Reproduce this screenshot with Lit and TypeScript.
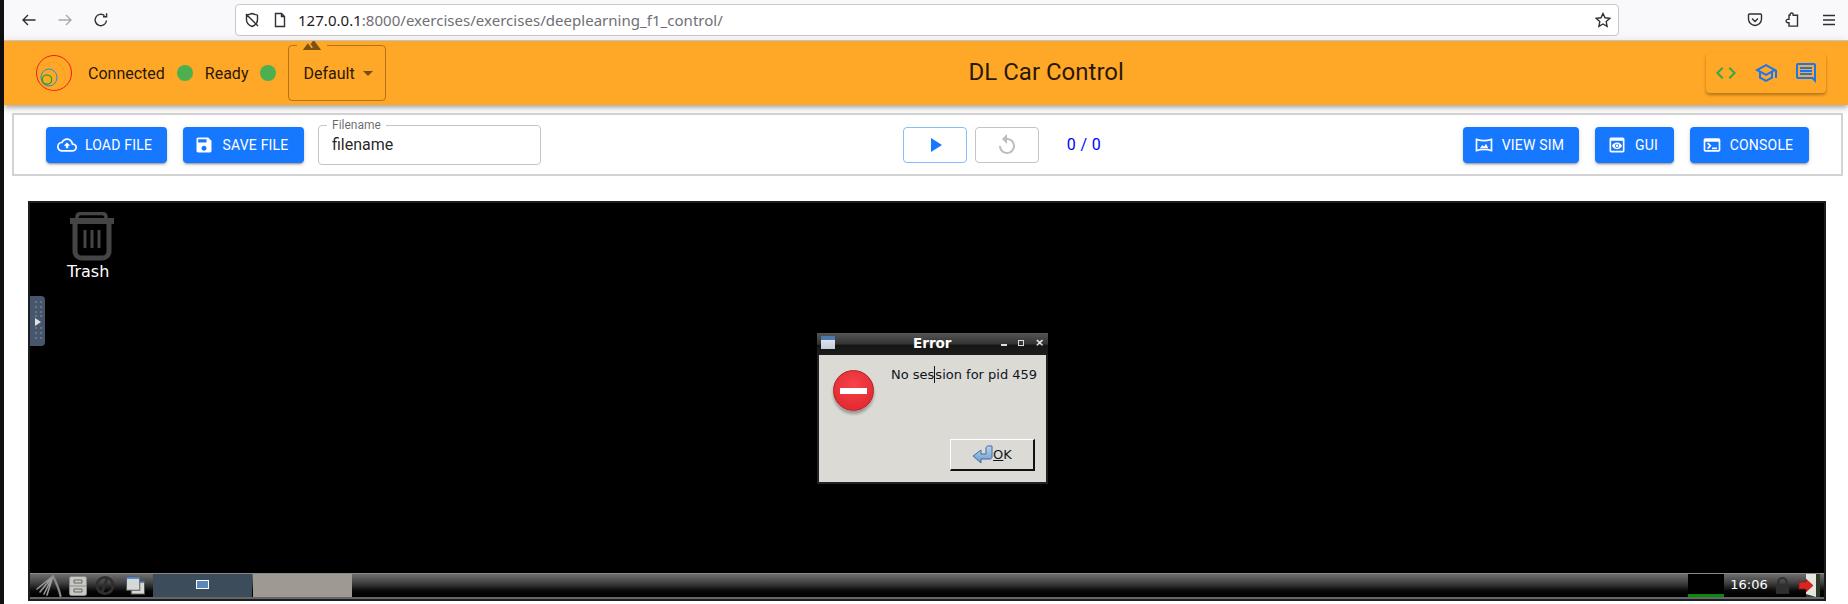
import {LitElement, css, html, svg} from 'lit';
import {customElement} from 'lit/decorators.js';

const icon = (d: string, cls = '') =>
  html`<svg class="mi ${cls}" viewBox="0 0 24 24"><path d="${d}"></path></svg>`;

const ICONS = {
  upload: 'M19.35 10.04C18.67 6.59 15.64 4 12 4 9.11 4 6.6 5.64 5.35 8.04 2.34 8.36 0 10.91 0 14c0 3.31 2.69 6 6 6h13c2.76 0 5-2.24 5-5 0-2.64-2.05-4.78-4.65-4.96zM19 18H6c-2.21 0-4-1.79-4-4 0-2.05 1.53-3.76 3.56-3.97l1.07-.11.5-.95C8.08 7.14 9.94 6 12 6c2.62 0 4.88 1.86 5.39 4.43l.3 1.5 1.53.11c1.56.1 2.78 1.41 2.78 2.96 0 1.65-1.35 3-3 3zM8 13h2.55v3h2.9v-3H16l-4-4z',
  save: 'M17 3H5c-1.11 0-2 .9-2 2v14c0 1.1.89 2 2 2h14c1.1 0 2-.9 2-2V7l-4-4zm-5 16c-1.66 0-3-1.34-3-3s1.34-3 3-3 3 1.34 3 3-1.34 3-3 3zm3-10H5V5h10v4z',
  play: 'M8 5v14l11-7z',
  replay: 'M12 5V1L7 6l5 5V7c3.31 0 6 2.69 6 6s-2.69 6-6 6-6-2.69-6-6H4c0 4.42 3.58 8 8 8s8-3.58 8-8-3.58-8-8-8z',
  pano: 'M20 6.54v10.91c-2.6-.77-5.28-1.16-8-1.16-2.72 0-5.4.39-8 1.16V6.54c2.6.77 5.28 1.16 8 1.16 2.72.01 5.4-.38 8-1.16M21.43 4c-.1 0-.2.02-.31.06C18.18 5.16 15.09 5.7 12 5.7c-3.09 0-6.18-.55-9.12-1.64-.11-.04-.22-.06-.31-.06-.34 0-.57.23-.57.63v14.75c0 .39.23.62.57.62.1 0 .2-.02.31-.06 2.94-1.1 6.03-1.64 9.12-1.64 3.09 0 6.18.55 9.12 1.64.11.04.21.06.31.06.33 0 .57-.23.57-.63V4.63c0-.4-.24-.63-.57-.63zM14.5 10.5 12 14l-1.7-2-3.3 3.9c3.3-.4 6.7-.4 10 0z',
  preview: 'M19 3H5c-1.11 0-2 .9-2 2v14c0 1.1.89 2 2 2h14c1.1 0 2-.9 2-2V5c0-1.1-.89-2-2-2zm0 16H5V7h14v12zm-5.5-6c0 .83-.67 1.5-1.5 1.5s-1.5-.67-1.5-1.5.67-1.5 1.5-1.5 1.5.67 1.5 1.5zM12 9c-2.73 0-5.06 1.66-6 4 .94 2.34 3.27 4 6 4s5.06-1.66 6-4c-.94-2.34-3.27-4-6-4zm0 6.5c-1.38 0-2.5-1.12-2.5-2.5s1.12-2.5 2.5-2.5 2.5 1.12 2.5 2.5-1.12 2.5-2.5 2.5z',
  terminal: 'M20 4H4c-1.1 0-2 .9-2 2v12c0 1.1.9 2 2 2h16c1.1 0 2-.9 2-2V6c0-1.1-.9-2-2-2zm0 14H4V8h16v10zm-2-1h-6v-2h6v2zM7.5 17l-1.41-1.41L8.67 13l-2.59-2.59L7.5 9l4 4-4 4z',
  code: 'M9.4 16.6 4.8 12l4.6-4.6L8 6l-6 6 6 6 1.4-1.4zm5.2 0 4.6-4.6-4.6-4.6L16 6l6 6-6 6-1.4-1.4z',
  school: 'M12 3 1 9l4 2.18v6L12 21l7-3.82v-6l2-1.09V17h2V9L12 3zm6.82 6L12 12.72 5.18 9 12 5.28 18.82 9zM17 15.99l-5 2.73-5-2.73v-3.72L12 15l5-2.73v3.72z',
  chat: 'M21.99 4c0-1.1-.89-2-1.99-2H4c-1.1 0-2 .9-2 2v12c0 1.1.9 2 2 2h14l4 4-.01-18zM20 4v13.17L18.83 16H4V4h16zM6 12h12v2H6zm0-3h12v2H6zm0-3h12v2H6z',
  landscape: 'M14 6l-3.75 5 2.85 3.8-1.6 1.2C9.81 13.75 7 10 7 10l-6 8h22L14 6z',
  drop: 'M7 10l5 5 5-5z',
};

@customElement('browser-bar')
export class BrowserBar extends LitElement {
  static styles = css`
    :host {
      display: flex;
      align-items: flex-start;
      height: 40px;
      border-bottom: 1px solid #cfcfd3;
      background: #f9f9fb;
      box-sizing: content-box;
      font-family: 'Noto Sans', sans-serif;
    }
    svg {
      width: 16px;
      height: 16px;
      fill: none;
      stroke: #2f2f35;
      stroke-width: 1.4;
      flex: none;
    }
    .nav {
      display: flex;
      align-items: center;
      gap: 20px;
      margin: 12px 0 0 17px;
      width: 214px;
    }
    .dim {
      stroke: #a8a8ac;
    }
    .url {
      display: flex;
      align-items: center;
      width: 1384px;
      height: 32px;
      box-sizing: border-box;
      margin-top: 4px;
      padding: 0 7px 0 8px;
      background: #fff;
      border: 1px solid #c8c8cc;
      border-radius: 4px;
      font-size: 15px;
      color: #6f6f75;
    }
    .url svg + svg {
      margin-left: 12px;
    }
    .addr {
      margin-left: 10px;
      flex: 1;
      white-space: nowrap;
      letter-spacing: 0.03px;
    }
    .addr b {
      font-weight: 400;
      color: #1c1b22;
    }
    .tools {
      display: flex;
      align-items: center;
      gap: 21px;
      margin: 12px 0 0 128px;
    }
  `;

  render() {
    return html`
      <div class="nav">
        <svg viewBox="0 0 16 16"><path d="M14.5 8H2M7 3 2 8l5 5"></path></svg>
        <svg class="dim" viewBox="0 0 16 16"><path d="M1.5 8H14M9 3l5 5-5 5"></path></svg>
        <svg viewBox="0 0 16 16"><path d="M13.5 8.5A5.7 5.7 0 1 1 11.5 3.6M13.6 1.2v3.6H10"></path></svg>
      </div>
      <div class="url">
        <svg viewBox="0 0 16 16"><path d="M8 1.5 13.5 3.2v4.6c0 3.4-2.6 5.6-5.5 6.7-2.9-1.1-5.5-3.3-5.5-6.7V3.2zM2 2l12 12"></path></svg>
        <svg viewBox="0 0 16 16"><path d="M3.5 1.5h6l3 3v10h-9zM9.5 1.5v3h3"></path></svg>
        <span class="addr"><b>127.0.0.1</b>:8000/exercises/exercises/deeplearning_f1_control/</span>
        <svg viewBox="0 0 16 16"><path d="M8 1.5l2 4.3 4.7.6-3.5 3.2.9 4.7L8 12l-4.1 2.3.9-4.7-3.5-3.2 4.7-.6z"></path></svg>
      </div>
      <div class="tools">
        <svg viewBox="0 0 16 16"><path d="M2.5 2h11c.6 0 1 .4 1 1v4c0 3.5-3 6.5-6.5 6.5S1.5 10.5 1.5 7V3c0-.6.4-1 1-1zM5 6.5l3 3 3-3"></path></svg>
        <svg viewBox="0 0 16 16"><path d="M6 3.5V2.8a1.6 1.6 0 0 1 3.2 0v.7h4.3v10.8H5V11H3.8a1.7 1.7 0 0 1 0-3.4H5V3.5z" transform="translate(0 -.2)"></path></svg>
        <svg viewBox="0 0 16 16"><path d="M2 3.5h12M2 8h12M2 12.5h12"></path></svg>
      </div>
    `;
  }
}

@customElement('app-header')
export class AppHeader extends LitElement {
  static styles = css`
    :host {
      display: flex;
      align-items: center;
      justify-content: space-between;
      height: 64px;
      padding: 0 22px 0 32px;
      background: #ffa726;
      color: rgba(0, 0, 0, 0.87);
      box-shadow: 0 2px 4px -1px rgba(0, 0, 0, 0.2), 0 4px 5px rgba(0, 0, 0, 0.14), 0 1px 10px rgba(0, 0, 0, 0.12);
      position: relative;
      font-family: Roboto, sans-serif;
    }
    .left {
      display: flex;
      align-items: center;
    }
    .logo {
      width: 36px;
      height: 36px;
      margin-right: 16px;
    }
    .status {
      font-size: 16px;
      margin-right: 12px;
    }
    .dot {
      width: 16px;
      height: 16px;
      border-radius: 50%;
      background: #4caf50;
      margin-right: 12px;
    }
    .select {
      position: relative;
      width: 98px;
      height: 56px;
      box-sizing: border-box;
      display: flex;
      align-items: center;
      padding-left: 14px;
      font-size: 16px;
      border: 1px solid rgba(0, 0, 0, 0.3);
      border-radius: 4px;
    }
    .legend {
      position: absolute;
      left: 8px;
      top: -5px;
      width: 30px;
      height: 12px;
      background: #ffa726;
      overflow: hidden;
      display: flex;
      justify-content: center;
    }
    .legend .mi {
      width: 20px;
      height: 20px;
      margin-top: -6px;
      fill: #7a5313;
    }
    .select .drop {
      width: 24px;
      height: 24px;
      margin-left: 1px;
      fill: rgba(0, 0, 0, 0.54);
    }
    h1 {
      margin: 0;
      font-size: 24px;
      font-weight: 400;
      line-height: 1;
      margin-top: -2px;
    }
    .shortcuts {
      display: flex;
      align-items: center;
      gap: 16px;
      height: 40px;
      padding: 0 8px;
      border-radius: 4px;
      box-shadow: 0 2px 3px rgba(0, 0, 0, 0.3);
      margin-top: -1px;
    }
    .mi {
      display: block;
      width: 24px;
      height: 24px;
    }
    .green {
      fill: #2fa84f;
    }
    .blue {
      fill: #1976f0;
    }
  `;

  render() {
    return html`
      <div class="left">
        <svg class="logo" viewBox="0 0 36 36" fill="none">
          <circle cx="18" cy="18" r="17.5" stroke="#ee1c1c" stroke-width="1"></circle>
          <ellipse cx="17" cy="21" rx="12" ry="14" stroke="#f09a10" stroke-width=".6" stroke-dasharray="5 1"></ellipse>
          <ellipse cx="13" cy="22.5" rx="8" ry="8.5" stroke="#1f8fe0" stroke-width="1"></ellipse>
          <circle cx="11" cy="24.5" r="4.7" stroke="#12a81e" stroke-width="1.2"></circle>
        </svg>
        <span class="status">Connected</span>
        <span class="dot"></span>
        <span class="status">Ready</span>
        <span class="dot"></span>
        <div class="select">
          <span class="legend">${icon(ICONS.landscape)}</span>
          Default
          ${icon(ICONS.drop, 'drop')}
        </div>
      </div>
      <h1>DL Car Control</h1>
      <div class="shortcuts">
        ${icon(ICONS.code, 'green')}
        ${icon(ICONS.school, 'blue')}
        ${icon(ICONS.chat, 'blue')}
      </div>
    `;
  }
}

@customElement('action-bar')
export class ActionBar extends LitElement {
  static styles = css`
    :host {
      display: flex;
      align-items: center;
      justify-content: space-between;
      height: 63px;
      box-sizing: border-box;
      margin: 8px 5px 0 8px;
      padding: 0 32px;
      background: #fff;
      border: 2px solid #d3d3d3;
      font-family: Roboto, sans-serif;
    }
    .group {
      display: flex;
      align-items: center;
    }
    .btn {
      display: flex;
      align-items: center;
      justify-content: center;
      gap: 8px;
      height: 36px;
      box-sizing: border-box;
      padding-right: 4px;
      margin-right: 16px;
      background: #1677ff;
      color: #fff;
      border-radius: 4px;
      font-size: 14px;
      font-weight: 400;
      text-transform: uppercase;
      letter-spacing: 0.2px;
      box-shadow: 0 3px 1px -2px rgba(0, 0, 0, 0.2), 0 2px 2px rgba(0, 0, 0, 0.14), 0 1px 5px rgba(0, 0, 0, 0.12);
    }
    .btn:last-child {
      margin-right: 0;
    }
    .btn .mi {
      width: 20px;
      height: 20px;
      fill: #fff;
    }
    .w121 { width: 121px; }
    .w116 { width: 116px; }
    .w79 { width: 79px; }
    .w119 { width: 119px; }
    .field {
      position: relative;
      width: 223px;
      height: 40px;
      box-sizing: border-box;
      margin-left: -2px;
      padding-left: 13px;
      display: flex;
      align-items: center;
      border: 1px solid #c4c4c4;
      border-radius: 4px;
      font-size: 16px;
      color: rgba(0, 0, 0, 0.87);
    }
    .field label {
      position: absolute;
      left: 8px;
      top: -7px;
      padding: 0 5px;
      background: #fff;
      font-size: 12px;
      line-height: 12px;
      color: rgba(0, 0, 0, 0.6);
    }
    .ctl {
      display: flex;
      align-items: center;
      justify-content: center;
      width: 64px;
      height: 36px;
      box-sizing: border-box;
      border-radius: 4px;
      margin-right: 8px;
    }
    .ctl .mi {
      width: 24px;
      height: 24px;
    }
    .run {
      border: 1px solid #8bbbff;
    }
    .run .mi {
      fill: #1677ff;
    }
    .off {
      border: 1px solid #c4c4c4;
    }
    .off .mi {
      fill: #bdbdbd;
    }
    .count {
      margin-left: 20px;
      font-size: 16px;
      letter-spacing: 0.4px;
      color: #0000ff;
    }
  `;

  render() {
    return html`
      <div class="group">
        <div class="btn w121">${icon(ICONS.upload)}Load file</div>
        <div class="btn w121">${icon(ICONS.save)}Save file</div>
        <div class="field"><label>Filename</label>filename</div>
      </div>
      <div class="group">
        <div class="ctl run">${icon(ICONS.play)}</div>
        <div class="ctl off">${icon(ICONS.replay)}</div>
        <span class="count">0 / 0</span>
      </div>
      <div class="group">
        <div class="btn w116">${icon(ICONS.pano)}View sim</div>
        <div class="btn w79">${icon(ICONS.preview)}Gui</div>
        <div class="btn w119">${icon(ICONS.terminal)}Console</div>
      </div>
    `;
  }
}

@customElement('vnc-desktop')
export class VncDesktop extends LitElement {
  static styles = css`
    :host {
      display: block;
      position: relative;
      width: 1798px;
      height: 400px;
      margin: 25px 0 0 24px;
      box-sizing: border-box;
      background: #000;
      border: 2px solid #1a1e22;
      font-family: 'DejaVu Sans', sans-serif;
      overflow: hidden;
    }
    .trash {
      position: absolute;
      left: 37px;
      top: 9px;
      width: 46px;
      color: #fff;
      font-size: 16px;
      line-height: 18px;
    }
    .trash svg {
      display: block;
      width: 46px;
      height: 49px;
      margin: 0 0 2px 2px;
    }
    .handle {
      position: absolute;
      left: 0;
      top: 93px;
      width: 15px;
      height: 50px;
      background: #47566b;
      border-radius: 0 4px 4px 0;
    }
    .handle svg {
      display: block;
    }
    .dialog {
      position: absolute;
      left: 787px;
      top: 130px;
      width: 231px;
      height: 151px;
      box-sizing: border-box;
      border: 2px solid #222;
      border-top: 0;
      background: #dbdad5;
      color: #10151c;
    }
    .titlebar {
      display: flex;
      align-items: center;
      height: 22px;
      box-sizing: border-box;
      margin: 0 -2px;
      padding: 0 7px 3px 4px;
      background: linear-gradient(#555, #333 50%, #151515 55%, #1c1c1c);
      color: #fff;
      font-size: 13.5px;
      font-weight: 700;
    }
    .titlebar .win {
      width: 14px;
      height: 13px;
      background: linear-gradient(#4d78ad 0 30%, #dce3ec 30%, #c4ccd6);
      margin-right: 78px;
    }
    .titlebar .name {
      flex: 1;
    }
    .titlebar i {
      display: block;
      width: 6px;
      height: 6px;
      margin-left: 11px;
      box-sizing: border-box;
    }
    .titlebar .min {
      border-bottom: 2px solid #ddd;
    }
    .titlebar .max {
      border: 1.5px solid #ddd;
    }
    .titlebar .close {
      color: #eee;
      font-style: normal;
      font-size: 11px;
      line-height: 6px;
    }
    .stop {
      position: absolute;
      left: 14px;
      top: 37px;
      width: 41px;
      height: 41px;
      box-sizing: border-box;
      border-radius: 50%;
      border: 1px solid #a9242a;
      background: radial-gradient(circle at 50% 35%, #f6434c, #e52c33 70%);
      box-shadow: 0 3px 3px rgba(0, 0, 0, 0.3);
      display: flex;
      align-items: center;
      justify-content: center;
    }
    .stop span {
      width: 27px;
      height: 6px;
      background: #fff;
    }
    .msg {
      position: absolute;
      left: 72px;
      top: 33px;
      font-size: 13px;
      line-height: 18px;
      white-space: nowrap;
    }
    .caret {
      display: inline-block;
      width: 0;
      height: 17px;
      border-left: 1px solid #10151c;
      vertical-align: -4px;
    }
    .ok {
      position: absolute;
      left: 131px;
      top: 106px;
      width: 85px;
      height: 32px;
      box-sizing: border-box;
      display: flex;
      align-items: center;
      justify-content: center;
      border: solid;
      border-color: #fff #111 #111 #fff;
      border-width: 1px 2px 2px 1px;
      font-size: 13px;
    }
    .panel {
      position: absolute;
      left: 0;
      right: 0;
      bottom: 0;
      height: 26px;
      box-sizing: border-box;
      display: flex;
      align-items: stretch;
      padding: 0 4px 0 5px;
      border-top: 1px solid #8a8a8a;
      border-bottom: 2px solid #666;
      background: linear-gradient(#6e6e6e, #3f3f3f 40%, #070707 74%, #000);
      color: #fff;
    }
    .panel svg {
      display: block;
      align-self: center;
      flex: none;
    }
    .task {
      width: 99px;
      background: #3c4c5a;
      display: flex;
      align-items: center;
      justify-content: center;
      margin-left: 7px;
    }
    .task span {
      width: 13px;
      height: 9px;
      box-sizing: border-box;
      background: #5a88bb;
      border: 1px solid #fff;
      margin-top: -2px;
    }
    .task2 {
      width: 99px;
      margin-left: 1px;
      background: #9e9a93;
    }
    .fill {
      flex: 1;
    }
    .graph {
      width: 36px;
      background: #000;
      position: relative;
    }
    .graph::after {
      content: '';
      position: absolute;
      left: 0;
      right: 0;
      bottom: 0;
      height: 3px;
      background: #0a8a0a;
    }
    .clock {
      width: 50px;
      text-align: center;
      font-size: 13px;
      line-height: 22px;
    }
  `;

  render() {
    return html`
      <div class="trash">
        <svg viewBox="0 0 46 49" fill="none" stroke="#454545">
          <path d="M8 7V5C8 2.5 10 1.5 12 1.5h21c2 0 4 1 4 3.5v2" stroke-width="3.5"></path>
          <path d="M1 9h44" stroke-width="6"></path>
          <path d="M6 11v28c0 4 3 7 7 7h20c4 0 7-3 7-7V11" stroke-width="5"></path>
          <path d="M16 18v18M23 18v18M30 18v18" stroke-width="3"></path>
        </svg>
        Trash
      </div>
      <div class="handle">
        <svg width="15" height="50" viewBox="0 0 15 50" fill="#66768c">
          ${[5, 10, 15, 19, 31, 36, 41].map(y => svg`<rect x="5" y="${y}" width="2" height="2"></rect><rect x="10" y="${y}" width="2" height="2"></rect>`)}
          <path d="M5 22v8l6-4z" fill="#dfe3e8"></path>
        </svg>
      </div>
      <div class="dialog">
        <div class="titlebar">
          <span class="win"></span>
          <span class="name">Error</span>
          <i class="min"></i><i class="max"></i><i class="close">×</i>
        </div>
        <div class="stop"><span></span></div>
        <div class="msg">No ses<span class="caret"></span>sion for pid 459</div>
        <div class="ok">
          <svg width="21" height="19" viewBox="0 0 21 19">
            <defs>
              <linearGradient id="okg" x1="0" y1="0" x2="0" y2="1">
                <stop offset="0" stop-color="#b9d2ec"></stop>
                <stop offset="1" stop-color="#6f9bcc"></stop>
              </linearGradient>
            </defs>
            <path d="M20 1v11c0 1-1 2-2 2H9v4L1 11l8-6v4h5V3c0-1 1-2 2-2z" fill="url(#okg)" stroke="#3e6ca3"></path>
          </svg>
          <span><u>O</u>K</span>
        </div>
      </div>
      <div class="panel">
        <svg width="27" height="23" viewBox="0 0 27 23" fill="none" stroke-linecap="round">
          <path d="M18 2 2 15M18 2 5 18M18 2 9 20M18 2l-6 19" stroke="#9a9a9a" stroke-width="1.6"></path>
          <path d="M18 2c3 6 6 13 7.500 20" stroke="#8a8a8a" stroke-width="2.200"></path>
        </svg>
        <svg style="margin-left:7px" width="18" height="20" viewBox="0 0 18 20">
          <rect x=".5" y=".5" width="17" height="19" rx="2" fill="#c9c9c4" stroke="#8a8a8a"></rect>
          <path d="M1 10h16" stroke="#8a8a8a"></path>
          <path d="M5 4h8v3H5zM5 13h8v3H5z" fill="none" stroke="#666"></path>
        </svg>
        <svg style="margin-left:7px" width="22" height="21" viewBox="0 0 22 22" fill="none" stroke="#2f2f2f" stroke-width="3">
          <circle cx="11" cy="11" r="8.5"></circle>
          <path d="M13 4 8 18"></path>
        </svg>
        <svg style="margin-left:9px" width="21" height="19" viewBox="0 0 21 20">
          <rect x="6" y="6" width="14" height="13" fill="#d9d9d4" stroke="#555"></rect>
          <rect x="6" y="5" width="14" height="2" fill="#3f73b5"></rect>
          <rect x="1" y="1" width="14" height="14" fill="#d5d8d8" stroke="#555"></rect>
          <rect x="1" y="1" width="14" height="2" fill="#4a80c4"></rect>
        </svg>
        <div class="task"><span></span></div>
        <div class="task2"></div>
        <div class="fill"></div>
        <div class="graph"></div>
        <div class="clock">16:06</div>
        <svg style="margin-left:1px" width="15" height="19" viewBox="0 0 18 20" fill="#2f2f2f">
          <path d="M1 9h16v11H1z"></path>
          <path d="M4 9V6a5 5 0 0 1 10 0v3" fill="none" stroke="#2f2f2f" stroke-width="2.5"></path>
        </svg>
        <svg style="margin-left:8px" width="22" height="23" viewBox="0 0 22 23">
          <path d="M8 0h14v23H8z" fill="#2c3a28"></path>
          <path d="M8 0h10v23L8 20z" fill="#e6e6de"></path>
          <path d="M1 8h7V5l7 6.500-7 6.500v-3H1z" fill="#d92424" stroke="#8a1212" stroke-width=".6"></path>
        </svg>
      </div>
    `;
  }
}

@customElement('app-root')
export class AppRoot extends LitElement {
  static styles = css`
    :host {
      display: block;
      width: 1848px;
      height: 604px;
      overflow: hidden;
      background: #fff;
    }
    .strip {
      display: block;
      border-left: 4px solid #111;
      height: 604px;
      box-sizing: border-box;
    }
  `;

  render() {
    return html`
      <div class="strip">
        <browser-bar></browser-bar>
        <app-header></app-header>
        <action-bar></action-bar>
        <vnc-desktop></vnc-desktop>
      </div>
    `;
  }
}
